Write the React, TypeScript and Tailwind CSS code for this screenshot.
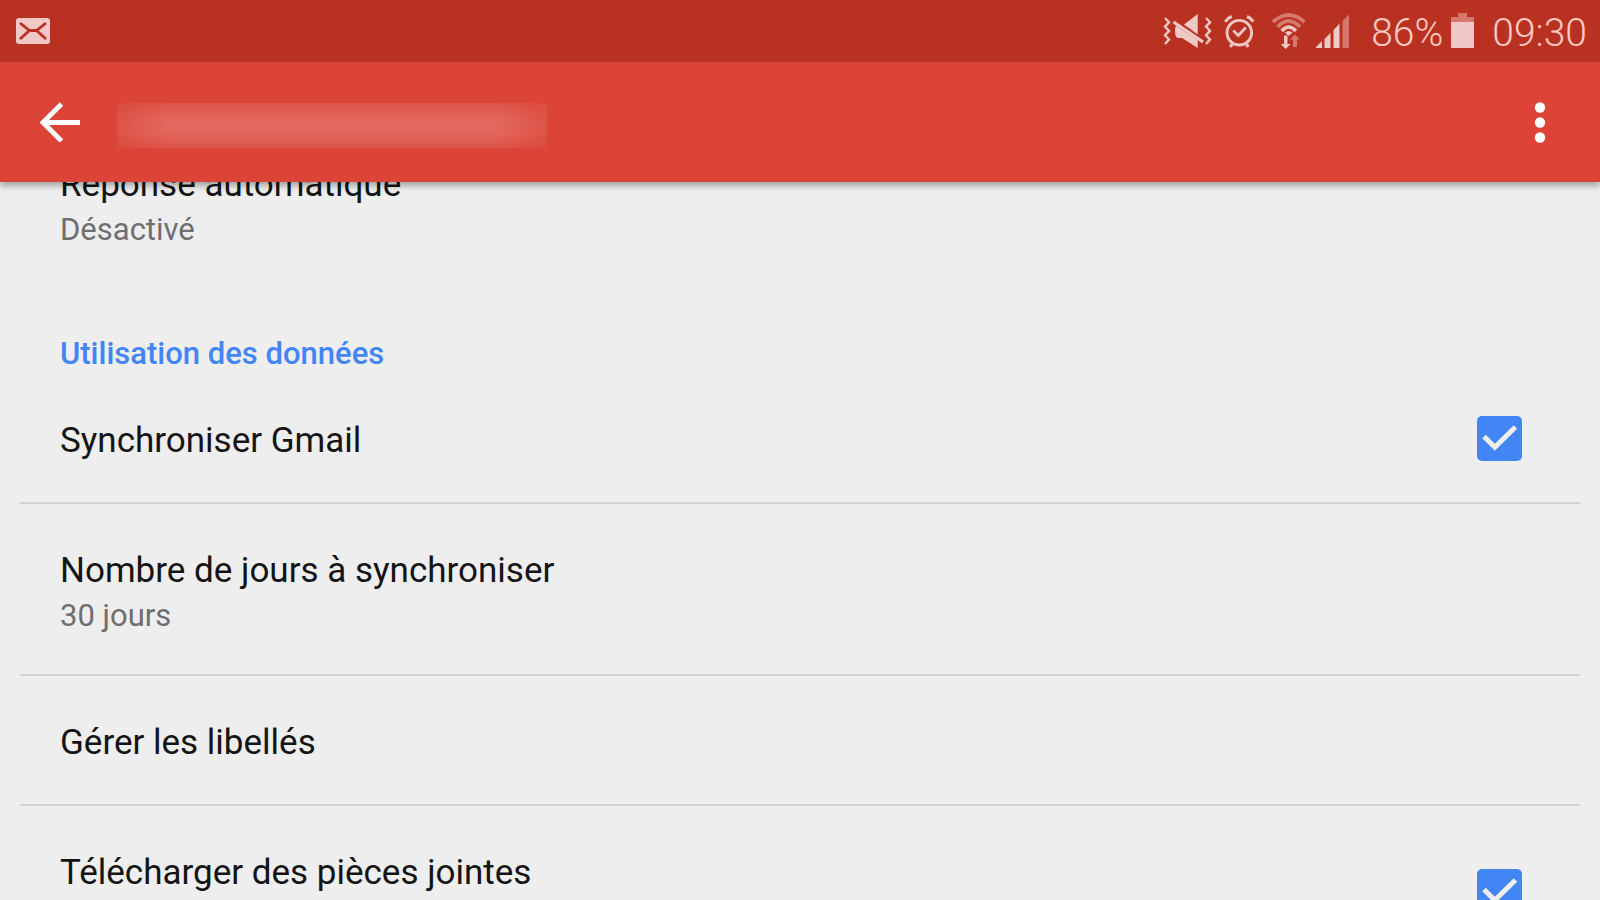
import { useState } from 'react';

type Setting = {
  id: string;
  title: string;
  subtitle?: string;
  checkbox?: boolean;
};

const DATA_SETTINGS: Setting[] = [
  { id: 'sync', title: 'Synchroniser Gmail', checkbox: true },
  { id: 'days', title: 'Nombre de jours à synchroniser', subtitle: '30 jours' },
  { id: 'labels', title: 'Gérer les libellés' },
  { id: 'attachments', title: 'Télécharger des pièces jointes', subtitle: '', checkbox: true },
];

function MailIcon() {
  return (
    <svg width="36" height="28" viewBox="0 0 36 28" fill="none" aria-hidden="true">
      <rect x="1" y="1" width="34" height="26" rx="3" fill="#f0c8c5" />
      <path d="M5 6l9.500 7.500h7L31 6M5 22l9.500-8.500M31 22l-9.500-8.500" stroke="#b93221" strokeWidth="2.8" />
    </svg>
  );
}

function MuteIcon() {
  return (
    <svg className="mr-0.5" width="52" height="36" viewBox="0 0 52 36" fill="none" aria-hidden="true">
      <path
        d="M4 5l4 4.3-4 4.3 4 4.3-4 4.3 4 4.3-4 4.5M45 5l4 4.3-4 4.3 4 4.3-4 4.3 4 4.3-4 4.5"
        stroke="#f0c8c5"
        strokeWidth="2.4"
      />
      <path d="M23 11.500L36.700 1v20.500zM15 12.500L36.700 27v8L21 25h-4q-3-1-3-6.500 0-4 1-6z" fill="#f0c8c5" />
      <path d="M12.500 9L42 29" stroke="#f0c8c5" strokeWidth="3.200" />
    </svg>
  );
}

function AlarmIcon() {
  return (
    <svg className="mr-[7px]" width="33" height="36" viewBox="0 0 33 36" fill="none" stroke="#f0c8c5" aria-hidden="true">
      <circle cx="16.300" cy="19.700" r="12.300" strokeWidth="2.900" />
      <path d="M10.300 17.500l5 5 7.500-8" strokeWidth="2.800" />
      <path d="M2.300 8.700Q4.500 5 8.700 3.500M30.300 8.700Q28 5 24 3.500M9 31l-1.500 3M23.600 31l1.500 3" strokeWidth="3.200" />
    </svg>
  );
}

function WifiIcon() {
  return (
    <svg width="36" height="36" viewBox="0 0 36 36" fill="none" aria-hidden="true">
      <path d="M2 9Q17.700-5 33.500 9M6.500 14Q17.700 2 29 14" stroke="#d4776c" strokeWidth="3.800" />
      <path d="M10.800 18Q17.700 10 24.800 18" stroke="#f0c8c5" strokeWidth="3.600" />
      <path d="M14 19.500q3.700-3 7.500 0L17.700 23z" fill="#f0c8c5" />
      <path d="M13 22.500h3.500V31h3.200l-5 5-5-5H13z" fill="#f0c8c5" />
      <path d="M22 34h4v-7.500h3L24 21.500l-5 5h3z" fill="#d4776c" />
    </svg>
  );
}

function SignalIcon() {
  return (
    <svg width="36" height="36" viewBox="0 0 36 36" aria-hidden="true">
      <path d="M1 35v-1l6-6v7zM9.500 35v-9l6-6v15zM18.500 35V17l6-6.500V35z" fill="#f0c8c5" />
      <path d="M27.500 35V8L34 1.500V35z" fill="#d4776c" />
    </svg>
  );
}

function BatteryIcon() {
  return (
    <svg width="24" height="36" viewBox="0 0 24 36" aria-hidden="true">
      <path d="M7 0h9v4h7v5H0V4h7z" fill="#d4776c" />
      <path d="M0 9h23v26H0z" fill="#f0c8c5" />
    </svg>
  );
}

function StatusBar() {
  return (
    <div className="relative z-20 flex h-[62px] shrink-0 items-center bg-[#b93221] pr-[13px] pl-[15px] text-[#ffc9c4]">
      <MailIcon />
      <div className="ml-auto flex items-center gap-2">
        <MuteIcon />
        <AlarmIcon />
        <WifiIcon />
        <SignalIcon />
      </div>
      <span className="ml-5 pt-1 text-[39px] leading-10 font-light">86%</span>
      <span className="mr-[17px] ml-2">
        <BatteryIcon />
      </span>
      <span className="pt-1 text-[39px] leading-10 font-light">09:30</span>
    </div>
  );
}

function Toolbar() {
  return (
    <header className="relative z-10 flex h-[120px] shrink-0 items-center bg-[#db4437] px-10 shadow-[0_4px_6px_rgba(0,0,0,0.3)]">
      <button type="button" aria-label="Retour">
        <svg width="40" height="40" viewBox="0 0 40 40" fill="none" stroke="#fff" strokeWidth="4.8" aria-hidden="true">
          <path d="M40 20.500H4M21.500 2L3 20.500 21.500 39" />
        </svg>
      </button>
      {/* account name is masked */}
      <div className="mt-1.5 ml-[37px] h-[45px] w-[430px] bg-[linear-gradient(to_right,#db443799,#db443700_12%,#db443700_88%,#db443799),linear-gradient(to_bottom,#de5348,#e2655a_30%,#e46a60_50%,#e2655a_70%,#de5348)]" />
      <button type="button" aria-label="Plus d'options" className="ml-auto flex w-10 justify-center">
        <svg width="12" height="42" viewBox="0 0 12 42" fill="#fff" aria-hidden="true">
          <circle cx="6" cy="6.500" r="5.200" />
          <circle cx="6" cy="21.500" r="5.200" />
          <circle cx="6" cy="36.500" r="5.200" />
        </svg>
      </button>
    </header>
  );
}

function SettingText({ title, subtitle }: { title: string; subtitle?: string }) {
  return (
    <span className="block pt-[43px] pb-[37px]">
      <span className="block text-[35px] leading-[48px] text-[#141414]">{title}</span>
      {subtitle !== undefined && (
        <span className="block min-h-[42px] text-[31px] leading-[42px] text-[#6f6f6f]">{subtitle}</span>
      )}
    </span>
  );
}

export default function App() {
  const [checked, setChecked] = useState<Record<string, boolean>>({ sync: true, attachments: true });

  return (
    <div className="flex h-screen flex-col overflow-hidden bg-[#eeeeee] font-[Roboto,sans-serif]">
      <StatusBar />
      <Toolbar />
      <main className="min-h-0 flex-1 overflow-hidden px-5">
        {/* list is scrolled, so this row slides under the toolbar */}
        <button type="button" className="-mt-16 block w-full px-10 text-left">
          <SettingText title="Réponse automatique" subtitle="Désactivé" />
        </button>
        <h2 className="px-10 pt-[46px] text-[31px] leading-[40px] font-medium text-[#4285f4]">
          Utilisation des données
        </h2>
        <ul>
          {DATA_SETTINGS.map((s) => (
            <li key={s.id} className="border-b-2 border-[#d3d3d3]">
              {s.checkbox ? (
                <label className="flex items-center justify-between pr-[58px] pl-10">
                  <SettingText title={s.title} subtitle={s.subtitle} />
                  <span className="grid">
                    <input
                      type="checkbox"
                      checked={!!checked[s.id]}
                      onChange={(e) => setChecked({ ...checked, [s.id]: e.target.checked })}
                      className="peer col-start-1 row-start-1 size-[45px] appearance-none rounded-[5px] border-4 border-[#757575] checked:border-0 checked:bg-[#4285f4]"
                    />
                    <svg
                      viewBox="0 0 45 45"
                      fill="none"
                      stroke="#eeeeee"
                      strokeWidth="5"
                      className="pointer-events-none invisible col-start-1 row-start-1 size-[45px] peer-checked:visible"
                      aria-hidden="true"
                    >
                      <path d="M7 20.500l10.800 10.700L38.500 11" />
                    </svg>
                  </span>
                </label>
              ) : (
                <button type="button" className="block w-full px-10 text-left">
                  <SettingText title={s.title} subtitle={s.subtitle} />
                </button>
              )}
            </li>
          ))}
        </ul>
      </main>
    </div>
  );
}
